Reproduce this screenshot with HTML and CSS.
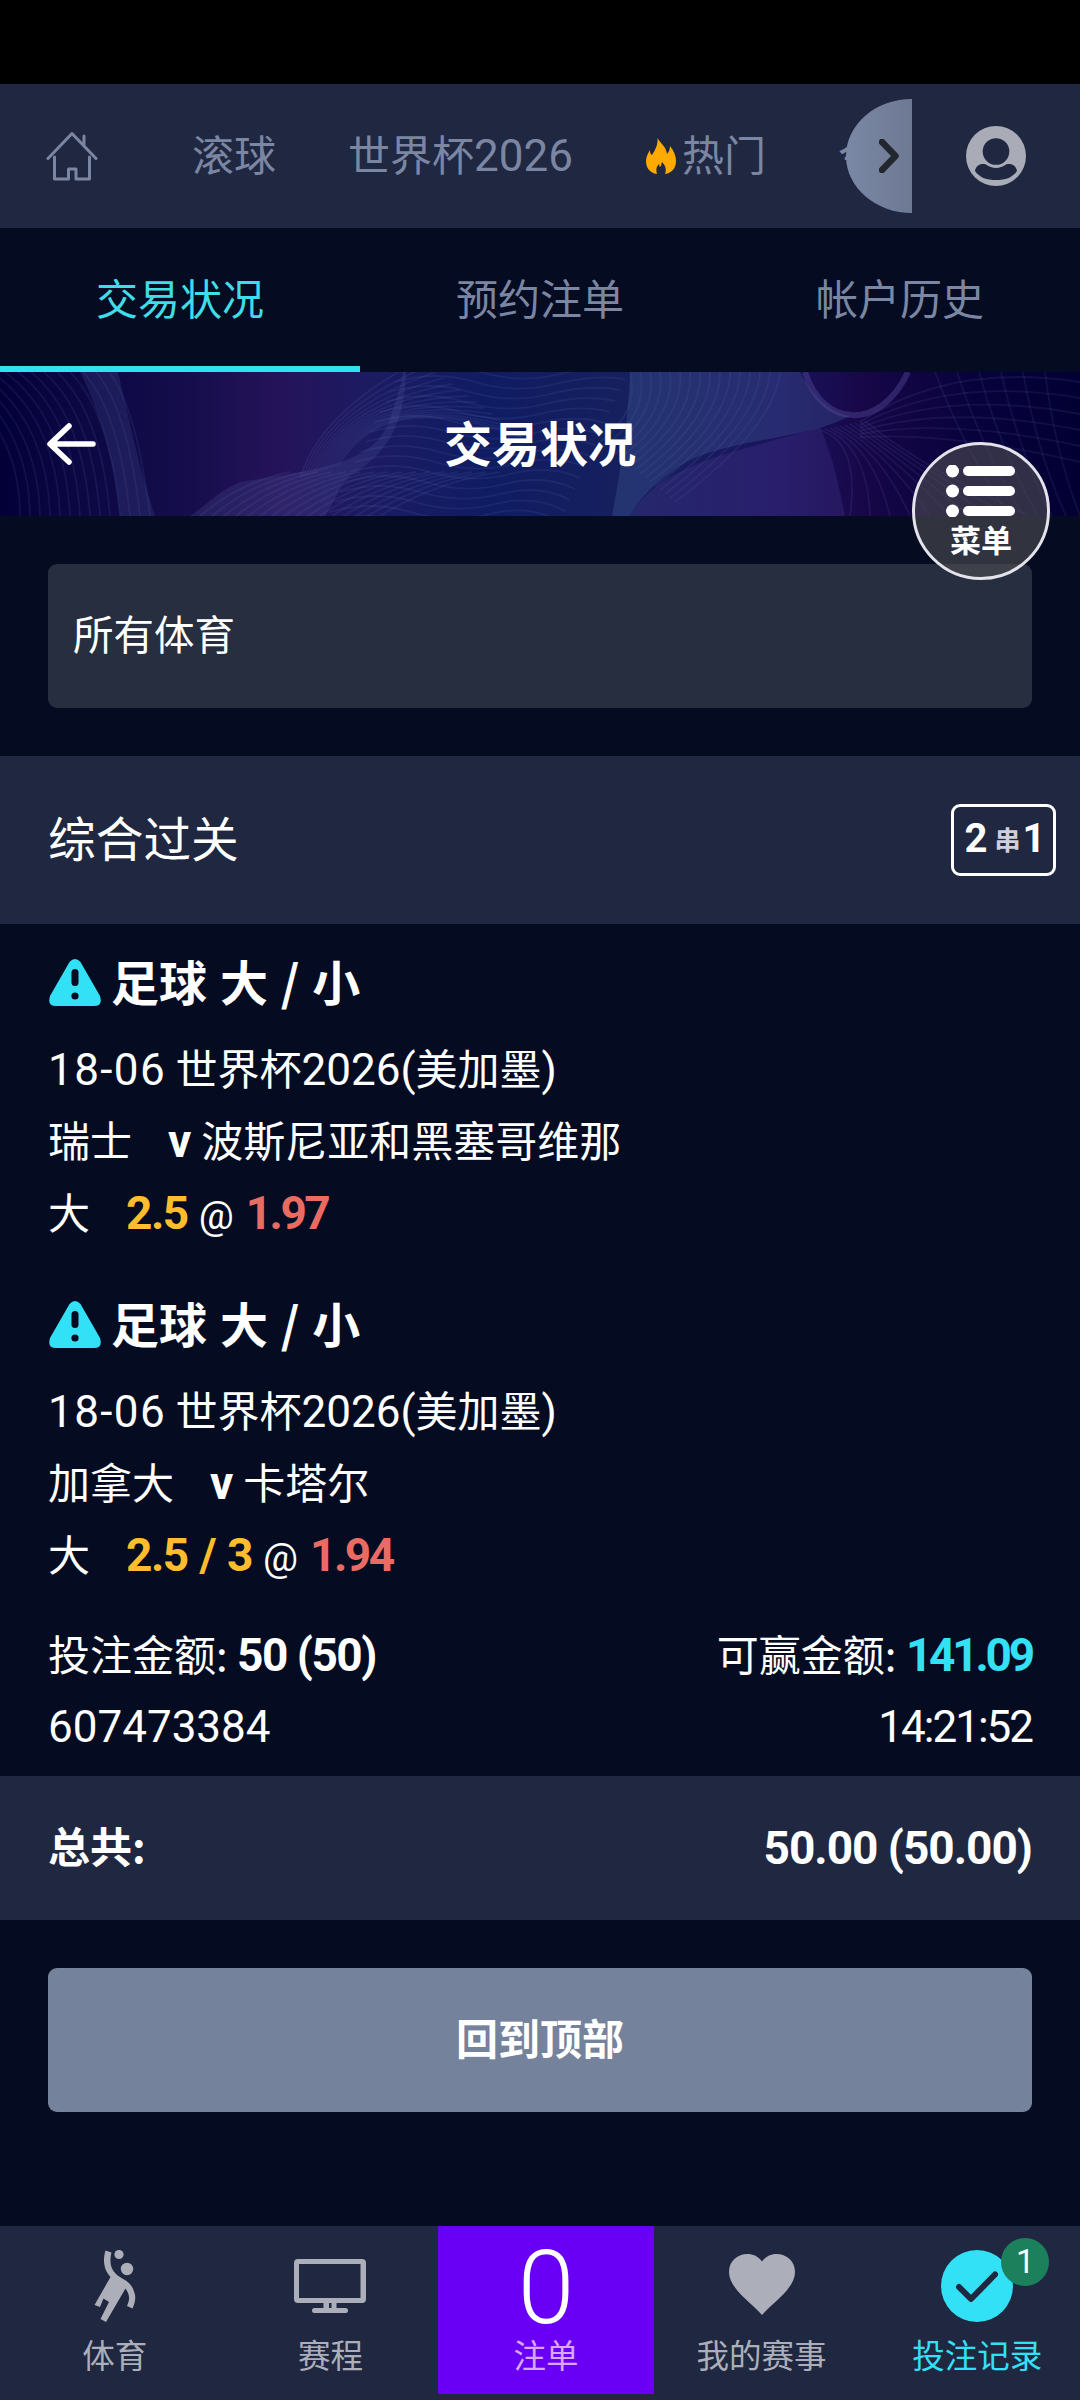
FILE: index.html
```html
<!DOCTYPE html>
<html lang="zh-CN">
<head>
<meta charset="utf-8">
<title>交易状况</title>
<link rel="stylesheet" href="styles.css">
</head>
<body>
<div class="app">
  <div class="statusbar"></div>
  <header class="topbar">
    <nav class="sports">
      <svg class="home" viewBox="0 0 52 50" width="52" height="50"><path d="M2 27.500 L26 2.500 L50 27.500 M8.500 26 V48 H22.500 V38 H30 V48 H43.500 V26 M38 14 V5" /></svg>
      <span class="sport">滚球</span>
      <span class="sport">世界杯<span class="num">2026</span></span>
      <span class="sport hot"><svg viewBox="0 0 30 36" width="30" height="36"><path d="M11.500 0 C14 5 20 8 21 16 C23 14 24 11 24 8 C28 13 30 18 30 23 C30 30 26 35 19 36 C21 31 19 27 16 24 C15 26 16 27 14 29 C13 28 13.500 27 13 26 C10 29 10 32 11 36 C4 35 0 30 0 23 C0 19 2 15 4 12 C4 15 4.500 16 6 17 C10 11 12 6 11.500 0Z"/></svg>热门</span>
      <span class="sport">今日</span>
    </nav>
    <span class="more"><svg viewBox="0 0 20 34" width="20" height="34"><path d="M3 3 L16.500 17 L3 31"/></svg></span>
    <svg class="avatar" viewBox="0 0 60 60" width="60" height="60"><circle cx="30" cy="30" r="30" fill="#a9abb7"/><circle cx="30" cy="25.500" r="13.300" fill="#1f2840"/><path d="M9 45 C10 39 15 37 20 38.500 C26 43 34 43 40 38.500 C45 37 50 39 51 45 C46 52 39 54 30 54 C21 54 14 52 9 45Z" fill="#1f2840"/></svg>
  </header>

  <nav class="tabs">
    <span class="tab active">交易状况</span>
    <span class="tab">预约注单</span>
    <span class="tab">帐户历史</span>
  </nav>

  <div class="banner">
    <svg class="waves" id="waves" viewBox="0 0 1080 144" width="1080" height="144">
      <path class="glow" d="M118 0 C130 50 140 100 155 144 H120 C115 90 100 40 80 0Z"/>
      <path class="glow" d="M240 110 C330 96 380 90 392 40 C400 18 402 8 403 0 H406 C404 50 390 80 350 104 C340 112 335 130 325 144 H190 C210 130 220 118 240 110Z"/>
      <path class="glow teal" d="M630 0 H800 C815 30 835 42 850 44 C810 66 740 66 690 88 C660 105 640 125 630 144 H612 C622 90 628 50 630 0Z"/>
      <path class="glow violet" d="M630 144 C660 90 740 80 820 55 C835 90 840 120 845 144Z"/>
      <path class="ring" d="M805 0 C822 55 880 60 908 0"/>
    </svg>
    <svg class="back" viewBox="0 0 50 42" width="50" height="42"><path d="M46 21 H4 M22 3 L3 21 L22 39"/></svg>
    <h1>交易状况</h1>
    <button class="menu">
      <svg viewBox="0 0 70 52" width="70" height="52"><circle cx="6.500" cy="6" r="6.500"/><circle cx="6.500" cy="26" r="6.500"/><circle cx="6.500" cy="46" r="6.500"/><rect x="17" y="1" width="52" height="10" rx="5"/><rect x="17" y="21" width="52" height="10" rx="5"/><rect x="17" y="41" width="52" height="10" rx="5"/></svg>
      <span>菜单</span>
    </button>
  </div>

  <main>
    <div class="select">所有体育</div>

    <section class="group">
      <h2>综合过关</h2>
      <span class="chip"><b>2</b><i>串</i><b>1</b></span>
    </section>

    <article class="leg">
      <h3><svg class="warn" viewBox="0 0 52 47" width="52" height="47"><path fill="#32e1f5" d="M20.500 3 Q26 -3 31.500 3 L51 37 Q54 47 45 47 H7 Q-2 47 1 37Z"/><rect x="22.500" y="10" width="7" height="17" rx="3.500" fill="#050c22"/><circle cx="26" cy="37" r="3.600" fill="#050c22"/></svg>足球 大 / 小</h3>
      <p><span class="num date">18-06</span> 世界杯<span class="num">2026(</span>美加墨<span class="num">)</span></p>
      <p>瑞士<b class="vs">v</b>波斯尼亚和黑塞哥维那</p>
      <p>大<b class="line">2.5</b><span class="at">@</span><b class="odds">1.97</b></p>
    </article>

    <article class="leg">
      <h3><svg class="warn" viewBox="0 0 52 47" width="52" height="47"><path fill="#32e1f5" d="M20.500 3 Q26 -3 31.500 3 L51 37 Q54 47 45 47 H7 Q-2 47 1 37Z"/><rect x="22.500" y="10" width="7" height="17" rx="3.500" fill="#050c22"/><circle cx="26" cy="37" r="3.600" fill="#050c22"/></svg>足球 大 / 小</h3>
      <p><span class="num date">18-06</span> 世界杯<span class="num">2026(</span>美加墨<span class="num">)</span></p>
      <p>加拿大<b class="vs">v</b>卡塔尔</p>
      <p>大<b class="line">2.5 / 3</b><span class="at">@</span><b class="odds">1.94</b></p>
    </article>

    <section class="stake">
      <div class="row"><span>投注金额: <b class="amt">50 (50)</b></span><span>可赢金额: <b class="amt win">141.09</b></span></div>
      <div class="row"><span class="num">607473384</span><span class="num time">14:21:52</span></div>
    </section>

    <section class="total"><b class="sum">总共:</b><b class="amt">50.00 (50.00)</b></section>

    <button class="totop">回到顶部</button>
  </main>

  <nav class="dock">
    <a class="item"><span class="icon"><svg viewBox="0 0 42 72" width="42" height="72"><circle cx="25" cy="4.500" r="4.600"/><circle cx="33" cy="19" r="6.200"/><path d="M11.500 0.500 L17.500 2.500 C15 13 17 19 22 24 C28 30 38 30 41 45 C42 50 40 55 38.500 58.500 L33 56 C36 49 36 45 31.500 38.500 L12 72 L6.500 69 L15 52 L9.500 48.500 L6 57 L0.500 55 L16.500 27 C9 19 9 9 11.500 0.500Z"/></svg></span><span>体育</span></a>
    <a class="item"><span class="icon"><svg viewBox="0 0 72 72" width="72" height="72"><path fill-rule="evenodd" d="M4 9 H68 Q72 9 72 13 V49 Q72 53 68 53 H42.500 V58 H51.500 Q54 58 54 60.500 Q54 63 51.500 63 H20.500 Q18 63 18 60.500 Q18 58 20.500 58 H29.500 V53 H4 Q0 53 0 49 V13 Q0 9 4 9Z M5 14 V48 H66.500 V14Z M35 53 V58 H37.500 V53Z"/></svg></span><span>赛程</span></a>
    <a class="item slip"><span class="icon zero">0</span><span>注单</span></a>
    <a class="item"><span class="icon"><svg viewBox="0 0 66 72" width="66" height="72"><path d="M33 65 C24 54 0 39 0 22 C0 3 24 -2 33 11.500 C42 -2 66 3 66 22 C66 39 42 54 33 65Z"/></svg></span><span>我的赛事</span></a>
    <a class="item current"><span class="icon"><svg viewBox="0 0 72 72" width="72" height="72"><circle cx="36" cy="36" r="36"/><path class="tick" d="M18 37 L30 49 L54 24.500"/></svg><em>1</em></span><span>投注记录</span></a>
  </nav>
</div>
<script src="waves.js"></script>
</body>
</html>
```
FILE: styles.css
```css
* { box-sizing: border-box; }

body {
  margin: 0;
  background: #050c22;
  color: #fff;
  font: 42px/72px "Noto Sans CJK SC", sans-serif;
}

h1, h2, h3, p { margin: 0; }

button {
  border: 0;
  padding: 0;
  color: inherit;
  font: inherit;
}

.app {
  display: flex;
  flex-direction: column;
  width: 1080px;
  height: 2400px;
  overflow: hidden;
}

.num, .amt, .line, .odds, .at, .vs, .chip b, .zero, .dock em {
  font-family: Roboto, sans-serif;
}

.num {
  font-size: 44px;
  line-height: 1;
}

.statusbar { height: 84px; background: #000; }

.topbar {
  display: flex;
  align-items: center;
  height: 144px;
  background: #1f2840;
}

.sports {
  display: flex;
  align-items: center;
  width: 912px;
  padding-left: 46px;
  color: #7b86a3;
  overflow: hidden;
}

.sports svg { flex: none; }

.home {
  margin-right: 22px;
  fill: none;
  stroke: #7b86a3;
  stroke-width: 3;
  stroke-linecap: round;
  stroke-linejoin: round;
}

.sport {
  flex: none;
  display: flex;
  align-items: center;
  margin-left: 72px;
  padding-bottom: 6px;
  white-space: nowrap;
}

.sport .num { padding-top: 5px; }

.hot svg {
  margin: 6px 6px 0 1px;
  fill: #ffaa00;
}

.more {
  z-index: 1;
  display: flex;
  align-items: center;
  justify-content: flex-end;
  width: 66px;
  height: 114px;
  margin-left: -66px;
  padding-right: 13px;
  border-radius: 66px 0 0 66px / 57px 0 0 57px;
  background: linear-gradient(90deg, #7a88a5, #6e7994);
}

.more path {
  fill: none;
  stroke: #22262d;
  stroke-width: 6.5;
  stroke-linecap: round;
  stroke-linejoin: round;
}

.avatar { margin-left: 54px; }

.tabs {
  display: grid;
  grid-template-columns: repeat(3, 1fr);
  height: 144px;
}

.tab {
  height: 144px;
  text-align: center;
  line-height: 137px;
  color: #7b86a3;
}

.active {
  color: #40dde8;
  border-bottom: 6px solid #32e1f0;
}

.banner {
  position: relative;
  display: grid;
  grid-template-columns: 150px 1fr 150px;
  align-items: center;
  height: 144px;
  background: linear-gradient(90deg, #030038 0, #0b0844 8%, #160e4c 18%, #25135a 26%, #1c1b62 34%, #101c62 45%, #16205e 58%, #1b145e 72%, #170748 80%, #08023c 90%, #020033 100%);
}

.waves {
  position: absolute;
  inset: 0;
}

.waves path { fill: none; stroke: rgba(120, 140, 210, .11); stroke-width: 1.8; }
.waves .glow { fill: rgba(90, 100, 170, .2); stroke: none; }
.waves .teal { fill: rgba(70, 100, 160, .3); }
.waves .violet { fill: rgba(80, 60, 150, .26); }
.waves .ring { stroke: rgba(90, 80, 160, .4); stroke-width: 6; }

.back {
  position: relative;
  margin-left: 47px;
  fill: none;
  stroke: #fff;
  stroke-width: 5.5;
  stroke-linecap: round;
  stroke-linejoin: round;
}

.banner h1 {
  position: relative;
  padding-bottom: 6px;
  font-size: 48px;
  text-align: center;
}

.menu {
  position: absolute;
  z-index: 2;
  top: 70px;
  right: 30px;
  display: flex;
  flex-direction: column;
  align-items: center;
  width: 138px;
  height: 138px;
  padding-top: 20px;
  border: 3px solid #e4e2ea;
  border-radius: 50%;
  background: rgba(78, 76, 80, .62);
  font-size: 31px;
  font-weight: 700;
  line-height: 40px;
}

.menu svg { flex: none; margin-bottom: 2px; fill: #fff; }

main { flex: 1; }

.select {
  height: 144px;
  margin: 48px;
  padding-left: 25px;
  border-radius: 9px;
  background: #272e40;
  font-size: 40.500px;
  line-height: 138px;
}

.group {
  display: flex;
  align-items: center;
  justify-content: space-between;
  height: 168px;
  padding: 0 24px 0 48px;
  background: #1f2840;
}

.group h2 {
  padding-bottom: 6px;
  font-size: 47.700px;
  font-weight: 400;
}

.chip {
  display: flex;
  align-items: center;
  justify-content: center;
  width: 105px;
  height: 72px;
  padding: 0 0 2px 3px;
  border: 3px solid #fff;
  border-radius: 9px;
  font-size: 40px;
}

.chip i {
  margin: 0 2px 0 7px;
  color: #cfcfdc;
  font-size: 26px;
  font-style: normal;
  font-weight: 700;
}

.leg {
  height: 342px;
  padding: 17px 48px 0;
}

.leg h3 {
  display: flex;
  align-items: center;
  height: 90px;
  padding-bottom: 13px;
  font-size: 48px;
  word-spacing: 2px;
}

.warn { margin: 6px 10px 0 1px; }

.date { letter-spacing: 1.4px; }

.vs {
  margin: 0 10px 0 36px;
  font-size: 46px;
  line-height: 1;
}

.line, .odds, .amt {
  font-size: 46px;
  line-height: 1;
  letter-spacing: -1.5px;
}

.line {
  margin: 0 11px 0 36px;
  color: #fdbd2c;
  word-spacing: 2px;
}

.at { margin-right: 12px; font-size: 39px; line-height: 1; }
.odds { color: #e96b62; letter-spacing: -2.5px; }

.stake { height: 168px; padding-top: 9px; }

.row {
  display: flex;
  justify-content: space-between;
  height: 72px;
  padding: 0 48px;
}

.row .num { line-height: 76px; }
.time { letter-spacing: -2px; }
.win { color: #32e1f5; letter-spacing: -3.2px; }

.total {
  display: flex;
  align-items: center;
  justify-content: space-between;
  height: 144px;
  padding: 0 48px;
  background: #1f2840;
}

.total .amt { letter-spacing: -1px; }
.sum { padding-bottom: 6px; }

.totop {
  display: block;
  width: 984px;
  height: 144px;
  margin: 48px;
  padding-bottom: 7px;
  border-radius: 9px;
  background: #75829c;
  font-weight: 700;
}

.dock {
  display: grid;
  grid-template-columns: repeat(5, 215.600px);
  height: 174px;
  padding: 0 0 6px 7px;
  background: #1f2840;
  color: #acafb9;
  font-size: 32.500px;
  line-height: 36px;
}

.item {
  display: flex;
  flex-direction: column;
  align-items: center;
  gap: 14px;
  padding-top: 24px;
}

.icon {
  position: relative;
  height: 72px;
  fill: #acafb9;
}

.icon svg { display: block; }

.slip { background: #6900f5; color: #d9a6fb; }

.zero {
  color: #fff;
  font-size: 102px;
  font-weight: 300;
  line-height: 76px;
}

.current { color: #32e1f5; }
.current .icon { fill: #32e1f5; }

.tick {
  fill: none;
  stroke: #1f2840;
  stroke-width: 6;
  stroke-linecap: round;
  stroke-linejoin: round;
}

.dock em {
  position: absolute;
  top: -12px;
  left: 60px;
  width: 48px;
  height: 48px;
  border-radius: 50%;
  background: #1c805c;
  color: #fff;
  font-size: 33px;
  font-style: normal;
  line-height: 48px;
  text-align: center;
}
```
FILE: waves.js
```js
// Fills the banner with families of thin contour lines.
const svg = document.getElementById('waves');
const first = svg.firstElementChild;

function line(d) {
  const p = document.createElementNS('http://www.w3.org/2000/svg', 'path');
  p.setAttribute('d', d);
  svg.insertBefore(p, first);
}

for (let i = 0; i < 14; i++) {
  line(`M${-60 + i * 13} 0 Q${20 + i * 9} ${50 - i} ${20 + i * 10} 144`);
  line(`M${300 + i * 3} ${106 - i} Q${320 + i * 5} ${40 - i * 2} ${420 + i * 8} ${-12 + i * 6}`);
}
for (let i = 0; i < 16; i++) {
  const y = i * 10;
  line(`M${400 - i * 5} ${y} q40 -12 80 0 t80 2 t70 ${-6 + i} `);
  line(`M${200 + i * 12} 144 Q${240 + i * 13} 110 ${290 + i * 14} 100`);
  line(`M${630 + i * 10} 0 Q${640 + i * 9} ${40 + i} ${600 + i * 5} ${70 + i * 4}`);
}
for (let i = 0; i < 10; i++) {
  line(`M${820 + i * 5} ${58 - i} Q${860 + i * 7} ${70 + i * 3} ${850 + i * 20} 144`);
}
for (let i = 0; i < 6; i++) {
  line(`M${935 + i * 22} 0 Q${965 + i * 18} 80 ${1010 + i * 14} 144`);
  line(`M860 ${50 + i * 3} Q950 ${-10 + i * 14} 1080 ${10 + i * 16}`);
}
```
